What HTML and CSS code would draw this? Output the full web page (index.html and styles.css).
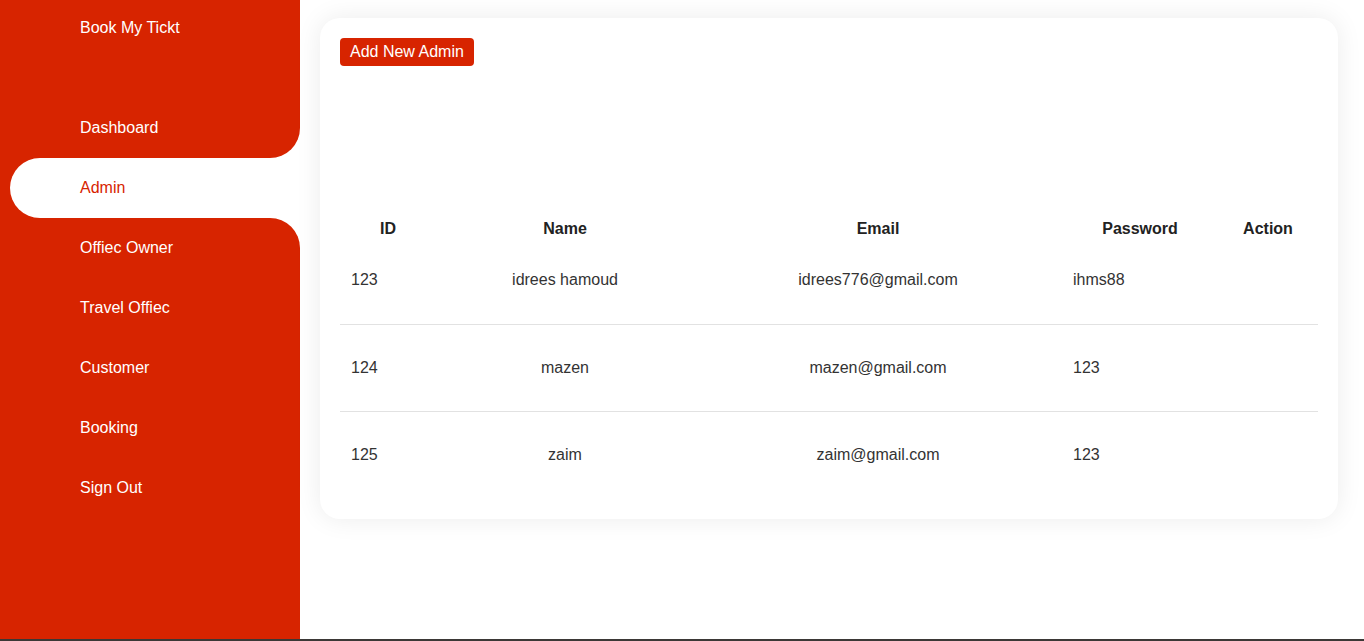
FILE: index.html
```html
<!DOCTYPE html>
<html lang="en">
<head>
<meta charset="utf-8">
<title>Book My Tickt - Admin</title>
<link rel="stylesheet" href="styles.css">
</head>
<body>
<div class="app">
  <aside class="sidebar">
    <div class="brand">Book My Tickt</div>
    <ul class="nav">
      <li class="nav-item prev"><span class="nav-link">Dashboard</span></li>
      <li class="nav-item active"><span class="nav-link">Admin</span></li>
      <li class="nav-item next"><span class="nav-link">Offiec Owner</span></li>
      <li class="nav-item"><span class="nav-link">Travel Offiec</span></li>
      <li class="nav-item"><span class="nav-link">Customer</span></li>
      <li class="nav-item"><span class="nav-link">Booking</span></li>
      <li class="nav-item"><span class="nav-link">Sign Out</span></li>
    </ul>
  </aside>
  <main class="main">
    <section class="card">
      <button class="btn-add">Add New Admin</button>
      <div class="spacer"></div>
      <table class="table">
        <colgroup>
          <col class="c-id"><col class="c-name"><col class="c-email"><col class="c-pass"><col class="c-action">
        </colgroup>
        <thead>
          <tr><th>ID</th><th>Name</th><th>Email</th><th>Password</th><th>Action</th></tr>
        </thead>
        <tbody>
          <tr><td class="left">123</td><td>idrees hamoud</td><td>idrees776@gmail.com</td><td class="left">ihms88</td><td></td></tr>
          <tr><td class="left">124</td><td>mazen</td><td>mazen@gmail.com</td><td class="left">123</td><td></td></tr>
          <tr><td class="left">125</td><td>zaim</td><td>zaim@gmail.com</td><td class="left">123</td><td></td></tr>
        </tbody>
      </table>
    </section>
  </main>
</div>
<div class="taskbar"></div>
</body>
</html>
```
FILE: styles.css
```css
* { box-sizing: border-box; }
html, body { margin: 0; padding: 0; }
body {
  font-family: "Liberation Sans", Arial, sans-serif;
  font-size: 16px;
  background: #fff;
  height: 641px;
  overflow: hidden;
}
.app {
  display: flex;
  height: 639px;
}
.taskbar {
  height: 2px;
  background: #3b3836;
}
.sidebar {
  width: 300px;
  flex: 0 0 300px;
  background: #d72400;
  color: #fff;
}
.brand {
  height: 55px;
  line-height: 55px;
  padding-left: 80px;
  margin-bottom: 43px;
}
.nav {
  list-style: none;
  margin: 0;
  padding: 0;
  background: #fff;
}
.nav-item {
  height: 60px;
  background: #d72400;
}
.nav-link {
  display: block;
  height: 60px;
  line-height: 60px;
  padding-left: 80px;
  color: #fff;
}
.nav-item.prev { border-bottom-right-radius: 30px; }
.nav-item.next { border-top-right-radius: 30px; }
.nav-item.active .nav-link {
  margin-left: 10px;
  padding-left: 70px;
  background: #fff;
  color: #d72400;
  border-radius: 30px 0 0 30px;
}
.main {
  flex: 1;
  padding: 18px 26px 0 20px;
}
.card {
  background: #fff;
  border-radius: 20px;
  box-shadow: 0 0 26px rgba(0, 0, 0, 0.08);
  padding: 20px 20px 21px 20px;
}
.btn-add {
  display: block;
  height: 28px;
  padding: 0 10px;
  border: none;
  border-radius: 4px;
  background: #d72400;
  color: #fff;
  font-family: inherit;
  font-size: 16px;
}
.spacer { height: 154px; }
.table {
  width: 100%;
  border-collapse: collapse;
  table-layout: fixed;
  color: #333;
}
.c-id { width: 96px; }
.c-name { width: 258px; }
.c-email { width: 368px; }
.c-pass { width: 156px; }
.c-action { width: 100px; }
.table th {
  height: 17px;
  line-height: 17px;
  padding: 0;
  font-weight: bold;
  color: #222;
  text-align: center;
}
.table td {
  height: 87px;
  line-height: 18px;
  padding: 0 10px;
  text-align: center;
}
.table td.left { text-align: left; padding-left: 11px; }
.table tbody tr { border-bottom: 1px solid #e2e2e2; }
.table tbody tr:last-child { border-bottom: none; }
.table thead tr { height: 17px; }
```
